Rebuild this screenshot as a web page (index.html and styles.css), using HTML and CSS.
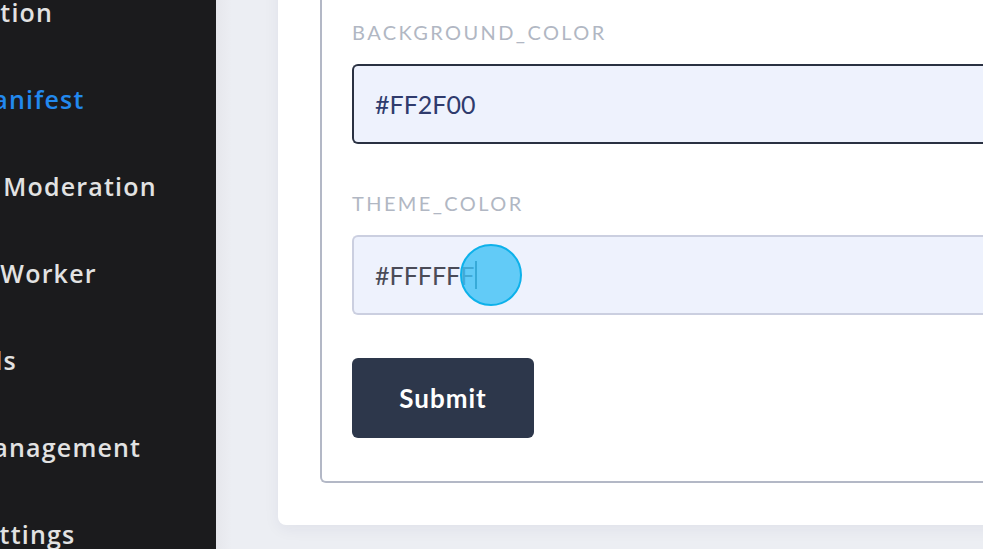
FILE: index.html
```html
<!DOCTYPE html>
<html lang="en">
<head>
  <meta charset="UTF-8" />
  <meta name="viewport" content="width=device-width, initial-scale=1.0"/>
  <title>PWA Settings</title>
  <link rel="stylesheet" href="styles.css">
</head>
<body>
  <!-- Sidebar -->
  <aside class="sidebar">
    <nav class="nav">
      <a href="#" class="nav-link">Action</a>
      <a href="#" class="nav-link active">Manifest</a>
      <a href="#" class="nav-link">AI Moderation</a>
      <a href="#" class="nav-link">JS Worker</a>
      <a href="#" class="nav-link">Ads</a>
      <a href="#" class="nav-link">Management</a>
      <a href="#" class="nav-link">Settings</a>
    </nav>
  </aside>

  <!-- Main -->
  <main class="main">
    <div class="card">
      <form class="fieldset">
        <div class="form-group">
          <label for="bg-color">BACKGROUND_COLOR</label>
          <input type="text" id="bg-color" class="input input-focus" value="#FF2F00">
        </div>
        <div class="form-group">
          <label for="theme-color">THEME_COLOR</label>
          <div class="input-wrap">
            <div class="input input-typing"><span>#FFFFFF</span><span class="caret"></span></div>
            <span class="pointer"></span>
          </div>
        </div>
        <button type="submit" class="submit-btn">Submit</button>
      </form>
    </div>
  </main>
</body>
</html>
```

FILE: styles.css
```css
/* Reset */
* {
  margin: 0;
  padding: 0;
  box-sizing: border-box;
}
body {
  display: flex;
  height: 549px;
  overflow: hidden;
  background: #eceef3;
  font-family: 'Lato', sans-serif;
}

/* Sidebar */
.sidebar {
  width: 216px;
  flex-shrink: 0;
  background: #1b1b1d;
  overflow: hidden;
}
.nav {
  display: flex;
  flex-direction: column;
  margin: -32px 0 0 -31px;
}
.nav-link {
  height: 87px;
  display: flex;
  align-items: center;
  white-space: nowrap;
  font-family: 'Open Sans', sans-serif;
  font-size: 25px;
  font-weight: 600;
  letter-spacing: 1.2px;
  color: #e2e2e2;
  text-decoration: none;
}
.nav-link.active {
  color: #2289ee;
}

/* Main area */
.main {
  flex: 1;
  display: flex;
  flex-direction: column;
  justify-content: flex-end;
  padding: 0 0 24px 62px;
  overflow: hidden;
  background: linear-gradient(to right, #e6e7ec 0, #eceef3 16px);
}
.card {
  width: 760px;
  background: #fff;
  border-radius: 8px 0 0 8px;
  box-shadow: 0 4px 16px rgba(30, 40, 80, 0.06);
  padding: 80px 0 42px 42px;
}
.fieldset {
  border: 2px solid #b3b8c6;
  border-right: none;
  border-radius: 6px 0 0 6px;
  padding: 60px 0 43px 30px;
}

/* Fields */
.form-group {
  margin-bottom: 47px;
}
label {
  display: block;
  font-size: 20px;
  line-height: 24px;
  letter-spacing: 2.4px;
  color: #b1b7c3;
  margin-bottom: 20px;
}
.input {
  display: flex;
  align-items: center;
  width: 100%;
  height: 80px;
  padding: 0 21px;
  background: #eef2fd;
  border: 2px solid #cbcfe0;
  border-right: none;
  border-radius: 6px 0 0 6px;
  font-family: 'Lato', sans-serif;
  font-size: 25px;
  color: #4a4b57;
  outline: none;
}
.input-focus {
  border-color: #2a3142;
  color: #2f3b6d;
}
.input-wrap {
  position: relative;
}
.caret {
  display: inline-block;
  width: 2px;
  height: 28px;
  margin-left: 1px;
  background: #1d4f66;
}
/* Click indicator over the field */
.pointer {
  position: absolute;
  left: 108px;
  top: 9px;
  width: 62px;
  height: 62px;
  border-radius: 50%;
  background: rgba(62, 193, 245, 0.8);
  border: 2px solid #0db1ea;
}

/* Button */
.submit-btn {
  width: 182px;
  height: 80px;
  margin-top: -4px;
  background: #2d374b;
  border: none;
  border-radius: 6px;
  font-family: 'Lato', sans-serif;
  font-size: 26px;
  font-weight: 700;
  letter-spacing: 1px;
  color: #fff;
  cursor: pointer;
}
```
